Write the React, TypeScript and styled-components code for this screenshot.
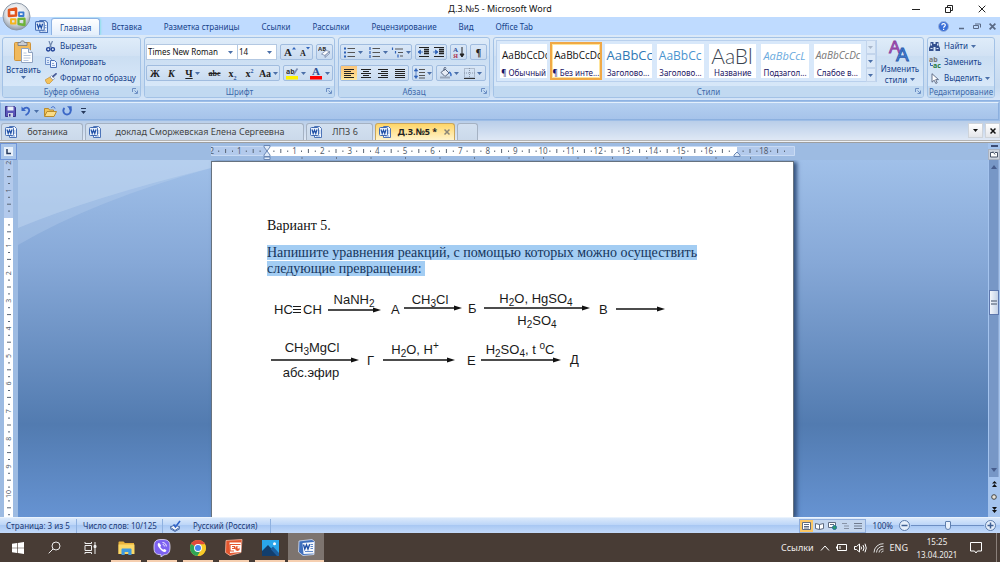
import React from 'react';
import styled, { createGlobalStyle, css } from 'styled-components';

const ui = '"Noto Sans", "Open Sans", sans-serif';
const navy = '#15428b';

const GlobalStyle = createGlobalStyle`
  *, *::before, *::after { box-sizing: border-box; }
  html, body { margin: 0; height: 100%; }
  body { font-family: ${ui}; font-size: 8px; line-height: 12px; color: ${navy}; overflow: hidden; }
  #root { height: 100%; }
  button, select, input { font: inherit; color: inherit; margin: 0; padding: 0; border: 0; background: none; border-radius: 0; }
  a { color: inherit; text-decoration: none; }
  svg { display: block; flex: none; }
  p, h1, h2 { margin: 0; font-weight: 400; font-size: inherit; }
`;

const Window = styled.div`
  display: flex;
  flex-direction: column;
  height: 100vh;
  position: relative;
  background: #9dbde6;
`;

/* ---------- title bar and tab strip ---------- */

const TitleBar = styled.header`
  display: grid;
  grid-template-columns: 1fr auto 1fr;
  align-items: center;
  height: 17px;
  background: #fff;
  color: #111;
  font-size: 9px;
`;
const WindowButtons = styled.div`
  display: flex;
  grid-column: 3;
  justify-content: flex-end;
  padding-right: 2px;
`;
const WindowButton = styled.button`
  width: 33px;
  height: 16px;
  display: flex;
  align-items: center;
  justify-content: center;
`;
const Title = styled.h1`
  grid-column: 2;
`;

const OfficeButton = styled.button`
  position: absolute;
  z-index: 2;
  left: 2px;
  top: 2px;
`;

const TabStrip = styled.nav`
  display: flex;
  align-items: stretch;
  height: 18px;
  padding-left: 35px;
  background: #bfdbff;
`;
const StripIcon = styled.span`
  display: flex;
  align-items: center;
  width: 16px;
`;
const RibbonTab = styled.a<{ $active?: boolean }>`
  display: flex;
  align-items: center;
  padding: 2px 11px 0;
  ${(p) =>
    p.$active &&
    css`
      padding: 1px 8px 0;
      margin-top: 1px;
      background: linear-gradient(#fff, #e3eefb);
      border: 1px solid #8db2e3;
      border-bottom: 0;
      border-radius: 3px 3px 0 0;
      box-shadow: 1px 0 2px #8fe0ea;
    `}
`;
const StripTools = styled.div`
  display: flex;
  align-items: center;
  gap: 8px;
  margin-left: auto;
  padding-right: 4px;
`;

/* ---------- ribbon ---------- */

const Ribbon = styled.section`
  display: flex;
  gap: 3px;
  height: 66px;
  padding: 2px 5px 2px 2px;
  background: linear-gradient(#dbe9f8, #c6daf0 80%, #d5e5f8);
  border-bottom: 1px solid #8db2e3;
`;
const Group = styled.section<{ $w?: number }>`
  display: flex;
  flex-direction: column;
  ${(p) => (p.$w ? `width: ${p.$w}px; flex: none;` : 'flex: 1; min-width: 0;')}
  border: 1px solid #a3c2e6;
  border-radius: 3px;
  background: linear-gradient(#dfecf9, #d2e2f4 30%, #cbdef2 31%, #dcebfb);
  overflow: hidden;
`;
const GroupBody = styled.div`
  display: flex;
  flex: 1;
  min-height: 0;
`;
const GroupTitle = styled.h2`
  display: flex;
  align-items: center;
  justify-content: center;
  height: 11px;
  line-height: 11px;
  background: #c1d9f1;
  color: #3e6aaa;
  position: relative;
  white-space: nowrap;
`;
const Launcher = styled.button`
  position: absolute;
  right: 2px;
  top: 2px;
`;
const BigButton = styled.button<{ $w: number }>`
  display: flex;
  flex-direction: column;
  align-items: center;
  width: ${(p) => p.$w}px;
  flex: none;
  padding-top: 2px;
  line-height: 9px;
  gap: 2px;
`;
const WithCaret = styled.span`
  display: flex;
  align-items: center;
  gap: 3px;
`;
const Stack = styled.div`
  display: flex;
  flex-direction: column;
`;
const SmallButton = styled.button`
  display: flex;
  align-items: center;
  gap: 3px;
  height: 16px;
  white-space: nowrap;
`;
const IconSlot = styled.span`
  display: flex;
  justify-content: center;
  width: 13px;
`;
const Rows = styled.div`
  display: flex;
  flex-direction: column;
  gap: 5px;
  padding: 6px 1px 0;
`;
const Row = styled.div`
  display: flex;
  gap: 3px;
`;
const Cluster = styled.div`
  display: flex;
  height: 16px;
  border: 1px solid #a0bcdf;
  border-radius: 2px;
  background: linear-gradient(#d9e7f7, #c9dbf0);
`;
const Tool = styled.button<{ $w: number; $on?: boolean }>`
  width: ${(p) => p.$w}px;
  height: 14px;
  display: flex;
  align-items: center;
  justify-content: center;
  gap: 2px;
  color: #222;
  background: ${(p) => (p.$on ? 'linear-gradient(#fbc67c, #fdd689 60%, #ffe9a0)' : 'none')};
`;
const ComboRow = styled.div`
  display: flex;
`;
const Combo = styled.span<{ $w: number }>`
  display: flex;
  align-items: center;
  width: ${(p) => p.$w}px;
  height: 16px;
  padding-right: 4px;
  background: #fff;
  border: 1px solid #b3c8e2;
  & + & { border-left: 0; }
`;
const Select = styled.select`
  appearance: none;
  flex: 1;
  min-width: 0;
  height: 14px;
  padding-left: 1px;
  color: #111;
  outline: none;
`;
const Glyph = styled.span<{ $face?: 'italic' | 'under' | 'strike' }>`
  font: bold 10px/13px "Liberation Serif", serif;
  ${(p) => p.$face === 'italic' && 'font-style: italic;'}
  ${(p) => p.$face === 'under' && 'text-decoration: underline;'}
  ${(p) => p.$face === 'strike' && 'text-decoration: line-through; font-size: 8px;'}
  sub, sup { font-size: 6px; line-height: 0; color: #2a55a0; }
`;

const Gallery = styled.div`
  display: flex;
  gap: 5px;
  flex: 1;
  min-width: 0;
  margin: 2px 0 4px 2px;
  padding: 1px 0 1px 3px;
  border: 1px solid #b9d0ed;
  background: #d8e8fa;
`;
const StyleCard = styled.button<{ $on?: boolean }>`
  flex: 1;
  min-width: 0;
  margin: 2px 0;
  overflow: hidden;
  display: flex;
  flex-direction: column;
  background: #fff;
  white-space: nowrap;
  color: #1a1464;
  ${(p) => p.$on && 'outline: 2px solid #f0a846; box-shadow: inset 0 0 0 1px #ffe59a;'}
`;
const Sample = styled.span<{ $size: number; $color: string; $italic?: boolean; $light?: boolean }>`
  display: flex;
  align-items: center;
  width: 100%;
  height: 23px;
  padding-left: 2px;
  overflow: hidden;
  font-family: ${(p) => (p.$light ? 'Lato, sans-serif' : '"Open Sans", sans-serif')};
  font-weight: ${(p) => (p.$light ? 300 : 400)};
  font-size: ${(p) => p.$size}px;
  line-height: 23px;
  color: ${(p) => p.$color};
  font-style: ${(p) => (p.$italic ? 'italic' : 'normal')};
`;
const CardName = styled.span`
  width: 100%;
  text-align: center;
  line-height: 11px;
`;
const GalleryScroll = styled.div`
  display: flex;
  flex-direction: column;
  width: 10px;
  margin: -2px 0;
`;
const ScrollStep = styled.button`
  flex: 1;
  display: flex;
  align-items: center;
  justify-content: center;
  border: 1px solid #c3d5ec;
  background: #dce9f8;
`;

/* ---------- quick access and document tabs ---------- */

const QuickAccess = styled.div`
  display: flex;
  align-items: center;
  gap: 5px;
  height: 18px;
  margin: 1px 1px 1px 0;
  padding-left: 4px;
  background: linear-gradient(#b4cff0, #a6c3ea);
  border: 1px solid #8cb0df;
  border-top-color: #e3effc;
`;
const Customize = styled.button`
  padding-left: 4px;
`;
const DocTabs = styled.nav`
  display: flex;
  align-items: flex-end;
  gap: 2px;
  height: 19px;
  padding-left: 1px;
  background: linear-gradient(#b9cee9, #dfe8f5);
`;
const DocTab = styled.a<{ $w: number; $on?: boolean }>`
  display: flex;
  align-items: center;
  width: ${(p) => p.$w}px;
  height: 17px;
  padding: 0 4px 0 3px;
  font-size: 9px;
  white-space: nowrap;
  color: ${(p) => (p.$on ? '#222' : '#444')};
  font-weight: ${(p) => (p.$on ? 700 : 400)};
  border: 1px solid ${(p) => (p.$on ? '#c9a65c' : '#a5b2c3')};
  border-bottom: 0;
  border-radius: 3px 3px 0 0;
  background: ${(p) => (p.$on ? 'linear-gradient(#ffd667, #fff3cb)' : 'linear-gradient(#d3e0f0, #cbd9ea)')};
`;
const DocName = styled.span`
  flex: 1;
  text-align: center;
`;
const DocTools = styled.div`
  display: flex;
  gap: 2px;
  margin-left: auto;
  padding-bottom: 2px;
`;
const DocTool = styled.button`
  width: 15px;
  height: 15px;
  display: flex;
  align-items: center;
  justify-content: center;
  background: linear-gradient(#fff, #e4e6ea);
  border: 1px solid #cfd4da;
`;
const TabRule = styled.div`
  height: 3px;
  background: #eef1f5;
  border-bottom: 1px solid #9e9e9e;
  border-top: 1px solid #b4b4b4;
`;

/* ---------- editing area ---------- */

const Editor = styled.main`
  flex: 1;
  min-height: 0;
  display: grid;
  grid-template-columns: 18px 1fr 12px;
  grid-template-rows: 17px 1fr;
  overflow: hidden;
`;
const TabSelector = styled.button`
  width: 17px;
  height: 17px;
  display: flex;
  align-items: center;
  justify-content: center;
  border: 1px solid #6f95d8;
  background: #a9c5ea;
`;
const HRuler = styled.div`
  display: flex;
  justify-content: center;
  overflow: hidden;
  background: #9dbbe2;
  padding-right: 1px;
`;
const VRuler = styled.div`
  overflow: hidden;
  padding-left: 4px;
  background: #9dbbe2;
`;
const RightColumn = styled.div`
  grid-column: 3;
  grid-row: 1 / 3;
  display: flex;
  flex-direction: column;
  align-items: center;
  background: #a5c4ee;
`;
const Split = styled.button`
  width: 7px;
  height: 2px;
  margin: 2px 0;
  background: #3c4c74;
`;
const RulerToggle = styled.button`
  width: 12px;
  height: 11px;
  display: flex;
  align-items: center;
  justify-content: center;
  background: #cdd3dd;
  border: 1px solid #aab2c0;
`;
const Track = styled.div`
  flex: 1;
  width: 10px;
  display: flex;
  flex-direction: column;
  align-items: center;
  justify-content: space-between;
  padding: 5px 0;
  background: #7797c6;
  border-right: 1px solid #8fabd4;
`;
const Thumb = styled.div`
  width: 10px;
  height: 25px;
  display: flex;
  flex-direction: column;
  align-items: center;
  justify-content: center;
  gap: 1px;
  background: linear-gradient(90deg, #f3f6fb, #c3d1e6);
  border: 1px solid #5d77ad;
  i { width: 6px; height: 2px; background: #8e99aa; }
`;
const ThumbSlot = styled.div`
  flex: 1;
  display: flex;
  flex-direction: column;
  &::before { content: ""; flex: 121; }
  &::after { content: ""; flex: 153; }
`;
const BrowseButtons = styled.div`
  display: flex;
  flex-direction: column;
  align-items: center;
  gap: 7px;
  padding: 4px 0 4px;
`;
const Workspace = styled.div`
  display: grid;
  grid-template-columns: 1fr;
  min-height: 0;
  overflow: hidden;
  background: linear-gradient(#a0c0e9 0, #86a8d7 29%, #527bb0 74%, #6693d2 100%);
`;
const Sweep = styled.svg`
  grid-area: 1 / 1;
  width: 193px;
  height: 86px;
`;
const Page = styled.article`
  grid-area: 1 / 1;
  justify-self: center;
  width: 100%;
  max-width: 583px;
  margin: 1px 1px 0 0;
  padding: 56px 55px 0;
  background: #fff;
  border: 1px solid #66727f;
  border-bottom: 0;
  box-shadow: 3px 1px 4px #33517e;
  font: 14px/16px "Liberation Serif", serif;
  color: #111;
  position: relative;
`;
const Heading = styled.p`
  margin-bottom: 11px;
`;
const Selected = styled.mark`
  background: #a3cdf3;
  color: #16355c;
`;
const Scheme = styled.svg`
  margin-top: 9px;
  font-family: "Liberation Sans", Arial, sans-serif;
  font-size: 13px;
`;

/* ---------- status bar ---------- */

const StatusBar = styled.footer`
  display: flex;
  align-items: center;
  height: 16px;
  background: linear-gradient(#dbe9fb, #bdd6f8 45%, #a9c8f3 50%, #c3dafa);
  border-top: 1px solid #eaf3fd;
  color: #1c3a76;
`;
const StatusItem = styled.span<{ $w: number }>`
  display: flex;
  align-items: center;
  width: ${(p) => p.$w}px;
  height: 14px;
  padding-left: 6px;
  gap: 11px;
  border-right: 1px solid #8fb1e0;
  white-space: nowrap;
`;
const ViewButtons = styled.div`
  display: flex;
  margin-left: auto;
  border: 1px solid #8faddb;
  background: #c4d6ee;
`;
const ViewButton = styled.button<{ $on?: boolean }>`
  width: 13px;
  height: 12px;
  display: flex;
  align-items: center;
  justify-content: center;
  background: ${(p) => (p.$on ? '#fbc765' : 'none')};
`;
const Zoom = styled.label`
  display: flex;
  align-items: center;
  gap: 5px;
  padding: 0 3px 0 7px;
`;
const ZoomRange = styled.input`
  appearance: none;
  width: 73px;
  height: 10px;
  margin: 0 -5px;
  background: linear-gradient(#6d8fc4, #6d8fc4) center / 100% 1px no-repeat;
  &::-webkit-slider-thumb {
    appearance: none;
    width: 6px;
    height: 9px;
    background: #e8f0fb;
    border: 1px solid #5f7fae;
    border-radius: 1px 1px 3px 3px;
  }
`;

/* ---------- taskbar ---------- */

const Taskbar = styled.nav`
  display: flex;
  height: 29px;
  background: #483c35;
  color: #f2efed;
  font-size: 9px;
`;
const TaskButton = styled.button<{ $open?: boolean; $active?: boolean }>`
  width: 36px;
  height: 29px;
  display: flex;
  align-items: center;
  justify-content: center;
  background: ${(p) => (p.$active ? '#7d746f' : 'none')};
  ${(p) =>
    p.$open &&
    `background-image: linear-gradient(#f6cfb0, #f6cfb0);
     background-size: ${p.$active ? '36px' : '30px'} 2px;
     background-position: center bottom;
     background-repeat: no-repeat;`}
`;
const Tray = styled.div`
  display: flex;
  align-items: center;
  gap: 6px;
  margin-left: auto;
  padding-right: 3px;
`;
const Clock = styled.time`
  width: 46px;
  text-align: center;
  font-size: 8px;
  line-height: 13px;
`;
const Notice = styled.button`
  padding: 0 14px 0 4px;
  border-right: 1px solid #8a807a;
  height: 29px;
`;

/* ---------- icons ---------- */

const Caret = ({ c = '#4b6fa8' }: { c?: string }) => (
  <svg width="5" height="3" viewBox="0 0 5 3"><path d="M0 0h5L2.500 3z" fill={c} /></svg>
);
const BarCaret = () => (
  <svg width="5" height="6" viewBox="0 0 5 6"><path d="M0 0h5v1H0zM0 3h5L2.500 6z" fill="#26395c" /></svg>
);
const LaunchIcon = () => (
  <svg width="6" height="6" viewBox="0 0 6 6" fill="none" stroke="#6c8fc4">
    <path d="M.5 4V.5H4M2.500 2.500 5 5M5.500 2.500v3h-3" />
  </svg>
);
const WordDocIcon = ({ s = 12 }: { s?: number }) => (
  <svg width={s} height={s} viewBox="0 0 12 12">
    <path d="M4.500.5h5l2 2v9h-7z" fill="#f4f8fe" stroke="#4d74b8" />
    <path d="M9 5h1.500M9 7h1.500M6 10h4" stroke="#7fa0d6" />
    <rect x=".5" y="1.500" width="8" height="8" rx="1" fill="#e9f1fc" stroke="#3f69b2" />
    <path d="M2 3.500 3.200 7.500 4.500 4.200 5.800 7.500 7 3.500" fill="none" stroke="#1f4fa6" strokeWidth="1.200" />
  </svg>
);
const OfficeLogo = () => (
  <svg width="29" height="29" viewBox="0 0 29 29">
    <defs>
      <radialGradient id="orb" cx=".5" cy=".35" r=".65">
        <stop offset="0" stopColor="#fff" /><stop offset=".6" stopColor="#dfe3e8" /><stop offset="1" stopColor="#8f9aa8" />
      </radialGradient>
    </defs>
    <circle cx="14.500" cy="14.500" r="13.500" fill="url(#orb)" stroke="#8d99a8" />
    <g fill="none" strokeLinejoin="round">
      <path d="M7 8l7-1.500v7l-7 .5z" stroke="#e2551d" strokeWidth="2.600" />
      <path d="M17 10.300h4.500v3.700H17z" stroke="#3a7ad0" strokeWidth="1.800" />
      <path d="M9 17.300h4.500v4.200H9z" stroke="#f4b51e" strokeWidth="2" />
      <path d="M16.500 17l6-.3v6.300l-6-1z" stroke="#6eb43a" strokeWidth="2.300" />
    </g>
  </svg>
);
const PasteIcon = () => (
  <svg width="20" height="23" viewBox="0 0 20 23">
    <rect x=".5" y="2.500" width="16" height="18" rx="1" fill="#f0b95c" stroke="#cf9338" />
    <path d="M4 2.500h2.500C6.500.3 10.500.3 10.500 2.500H13v3H4z" fill="#c8ccd4" stroke="#6f7683" strokeWidth=".8" />
    <path d="M7.500 8.500h7l4 4v10h-11z" fill="#fff" stroke="#8fa2c0" />
    <path d="M14.500 8.500v4h4" fill="#dfe9f7" stroke="#8fa2c0" />
    <path d="M9.500 13h3M9.500 15.500h7M9.500 18h7M9.500 20.500h5" stroke="#b9c8df" />
  </svg>
);
const CutIcon = () => (
  <svg width="11" height="11" viewBox="0 0 11 11" fill="none">
    <path d="M4 0 6.300 6.500M7.500 0 4.700 6.500" stroke="#7088ad" strokeWidth="1.200" />
    <circle cx="3.300" cy="8.300" r="1.700" stroke="#23459a" strokeWidth="1.400" />
    <circle cx="7.800" cy="8.300" r="1.700" stroke="#23459a" strokeWidth="1.400" />
  </svg>
);
const CopyIcon = () => (
  <svg width="12" height="11" viewBox="0 0 12 11">
    <path d="M.5.5h4l2 2v5h-6z" fill="#dce9fb" stroke="#6f8fc8" />
    <path d="M5.500 3.500h4l2 2v5h-6z" fill="#eef5ff" stroke="#4b71b8" />
    <path d="M7 6.500h2M7 8.500h3M2 3.500h2M2 5.500h2" stroke="#6f8fc8" strokeWidth=".8" />
  </svg>
);
const BrushIcon = () => (
  <svg width="12" height="11" viewBox="0 0 12 11">
    <path d="M0 7 5 4l3 3-4 4-2-.5z" fill="#f4c25a" stroke="#c4923a" strokeWidth=".7" />
    <path d="M5 4 6.500 2.500l3.200 3L8 7z" fill="#f3f5f9" stroke="#8492ab" strokeWidth=".7" />
    <path d="M8 3.500 11 .8" stroke="#4a5e9a" strokeWidth="1.800" strokeLinecap="round" />
  </svg>
);
const GrowIcon = ({ shrink }: { shrink?: boolean }) => (
  <svg width="13" height="12" viewBox="0 0 13 12">
    <text x={shrink ? 2 : 1} y="10" fontFamily="Liberation Serif, serif" fontSize={shrink ? 8 : 11} fontWeight="700" fill="#222">A</text>
    <path d={shrink ? 'M8 1h4l-2 2.500z' : 'M9 3.500h4L11 1z'} fill="#2f62b8" />
  </svg>
);
const EraserIcon = () => (
  <svg width="13" height="12" viewBox="0 0 13 12">
    <text x="0" y="5" fontFamily="Open Sans, sans-serif" fontSize="6" fontWeight="700" fill="#333">AB</text>
    <path d="M3.500 8 8 4.500l3.500 1-4.500 4z" fill="#fff" stroke="#7788aa" strokeWidth=".8" />
    <path d="M7 9.500v2l4.500-4v-2z" fill="#cdd8ea" stroke="#7788aa" strokeWidth=".8" />
  </svg>
);
const HighlightIcon = () => (
  <svg width="13" height="13" viewBox="0 0 13 13">
    <rect y="9" width="12" height="3.500" fill="#fff200" />
    <text x="0" y="7" fontFamily="Open Sans, sans-serif" fontSize="7" fontWeight="700" fill="#333">ab</text>
    <path d="M7.500 7.500 11.500 1.500" stroke="#7a8db3" strokeWidth="1.600" />
  </svg>
);
const FontColorIcon = () => (
  <svg width="13" height="13" viewBox="0 0 13 13">
    <rect y="9" width="12" height="3.500" fill="#ff0000" />
    <text x="2" y="8" fontFamily="Liberation Serif, serif" fontSize="11" fontWeight="700" fill="#2c4f93">A</text>
  </svg>
);
const ListIcon = ({ kind }: { kind: 'dot' | 'num' | 'multi' }) => (
  <svg width="13" height="11" viewBox="0 0 13 11">
    {kind === 'multi' ? (
      <><path d="M4 2h8M7 5.500h5M9 9h3" stroke="#555" /><path d="M1.500.5v2.500M4.500 4v2.500M7 7.500v3" stroke="#2f62b8" strokeWidth="1.200" /></>
    ) : (
      <>
        <path d="M4.500 1.500H12M4.500 5.500H12M4.500 9.500H12" stroke="#555" />
        {kind === 'dot'
          ? <path d="M1 .5h2v2H1zM1 4.500h2v2H1zM1 8.500h2v2H1z" fill="#2f62b8" />
          : <path d="M2 0v3M2 4v3M2 8v3" stroke="#2f62b8" strokeWidth="1.200" />}
      </>
    )}
  </svg>
);
const IndentIcon = ({ flip }: { flip?: boolean }) => (
  <svg width="12" height="10" viewBox="0 0 12 10">
    <path d="M1 .5h10M1 9.500h10" stroke="#222" />
    <path d="M6 2.500h5M6 4.500h5M6 6.500h5" stroke="#222" strokeWidth="1.400" />
    <path d={flip ? 'M0 5h3M2.500 3 5 5 2.500 7z' : 'M2 5h3M2.500 3 0 5l2.500 2z'} fill="#2f62b8" stroke="#2f62b8" strokeWidth=".8" />
  </svg>
);
const SortIcon = () => (
  <svg width="12" height="13" viewBox="0 0 12 13">
    <text x="0" y="6" fontFamily="Liberation Serif, serif" fontSize="7" fontWeight="700" fill="#2f4f9a">А</text>
    <text x="0" y="12" fontFamily="Liberation Serif, serif" fontSize="7" fontWeight="700" fill="#b13a55">Я</text>
    <path d="M9 1v9M7 8 9 11l2-3z" stroke="#222" fill="#222" />
  </svg>
);
const AlignIcon = ({ kind }: { kind: 'left' | 'center' | 'right' | 'both' }) => {
  const d = {
    left: 'M1 .5h10M1 2.500h7M1 4.500h10M1 6.500h7M1 8.500h10',
    center: 'M1 .5h10M3 2.500h6M1 4.500h10M3 6.500h6M1 8.500h10',
    right: 'M1 .5h10M4 2.500h7M1 4.500h10M4 6.500h7M1 8.500h10',
    both: 'M1 .5h10M1 2.500h10M1 4.500h10M1 6.500h10M1 8.500h10',
  }[kind];
  return <svg width="12" height="9" viewBox="0 0 12 9"><path d={d} stroke="#222" strokeWidth="1.200" /></svg>;
};
const SpacingIcon = () => (
  <svg width="11" height="11" viewBox="0 0 11 11">
    <path d="M5 1.500h6M5 4.500h6M5 7.500h6M5 10h6" stroke="#555" />
    <path d="M2 2v7M.3 3 2 .5 3.700 3zM.3 8 2 10.500 3.700 8z" stroke="#2f62b8" fill="#2f62b8" strokeWidth=".7" />
  </svg>
);
const BucketIcon = () => (
  <svg width="13" height="12" viewBox="0 0 13 12">
    <path d="M2 5.500 6 2l4 4-4 3.500z" fill="#e7edf6" stroke="#56657f" />
    <path d="M5 4V1.500c0-1.500 2-1.500 2 0" fill="none" stroke="#56657f" />
    <path d="M10 5c2 1 2.500 3 1.500 4" stroke="#3b6fc4" strokeWidth="1.500" fill="none" />
    <path d="M1 10.500h10" stroke="#9aa7ba" strokeWidth="2" />
  </svg>
);
const BordersIcon = () => (
  <svg width="11" height="11" viewBox="0 0 11 11">
    <path d="M.5.5h10v9H.5zM5.500 0v10M0 5h11" fill="none" stroke="#8995a8" strokeDasharray="1 1" />
    <path d="M0 10.500h11" stroke="#333" />
  </svg>
);
const ChangeStylesIcon = () => (
  <svg width="24" height="22" viewBox="0 0 24 22" fontFamily="Liberation Sans, sans-serif">
    <text x="1" y="13" fontSize="17" fill="#b65cc4" stroke="#8a3f9e" strokeWidth=".8">A</text>
    <text x="8" y="21" fontSize="19" fill="#4f8de0" stroke="#2b5cae" strokeWidth=".9">A</text>
  </svg>
);
const FindIcon = () => (
  <svg width="11" height="10" viewBox="0 0 11 10" fill="#35518f">
    <path d="M1.500 1h3v2h2V1h3v3l1.500 3v3H6.500V6h-2v4H0V7l1.500-3z" />
    <path d="M1.500 7.500h2M7.500 7.500h2M2.500 2.500v2M8.500 2.500v2" stroke="#dbe7f8" />
  </svg>
);
const ReplaceIcon = () => (
  <svg width="12" height="12" viewBox="0 0 12 12" fontFamily="Open Sans, sans-serif" fontWeight="700" fontSize="7">
    <text x="0" y="5.500" fill="#777">ab</text><text x="4" y="11.500" fill="#217a3a">ac</text>
    <path d="M1.500 7v2.500H4" fill="none" stroke="#2f62b8" />
  </svg>
);
const SelectIcon = () => (
  <svg width="10" height="11" viewBox="0 0 10 11">
    <path d="M2 .7v8.500l2.200-2 1.600 3.300 1.400-.7-1.500-3.200h2.800z" fill="#fff" stroke="#55637e" strokeWidth=".9" />
  </svg>
);
const SaveIcon = () => (
  <svg width="11" height="11" viewBox="0 0 11 11">
    <path d="M.5.5h9l1 1v9H.5z" fill="#5a55b8" stroke="#38348c" />
    <path d="M2.500.5h6v4h-6z" fill="#e9f0fb" /><path d="M3 7h5v4H3z" fill="#ccd5e6" /><path d="M4 8h1.500v2.500H4z" fill="#38348c" />
  </svg>
);
const UndoIcon = () => (
  <svg width="10" height="10" viewBox="0 0 10 10">
    <path d="M.5.5v4.500H5z" fill="#3b67c6" /><path d="M2 3.500C5 0 9 2 8 5.500 7.500 7.500 6 8.500 4.500 9.200" fill="none" stroke="#3b67c6" strokeWidth="1.800" />
  </svg>
);
const RedoIcon = () => (
  <svg width="10" height="10" viewBox="0 0 10 10">
    <path d="M2.500 2A3.700 3.700 0 1 0 7.500 2" fill="none" stroke="#3b67c6" strokeWidth="1.900" /><path d="M5 .3h4.700V5z" fill="#3b67c6" />
  </svg>
);
const OpenIcon = () => (
  <svg width="13" height="11" viewBox="0 0 13 11">
    <path d="M.5 10V2.500h4l1 1.500h4v1.500" fill="#f2c459" stroke="#b98b2e" /><path d="M.5 10.500 3 5.500h9.500l-2.500 5z" fill="#fbdc86" stroke="#b98b2e" />
    <path d="M7 2c1.500-2 3.500-1.500 4 .5" fill="none" stroke="#3b67c6" />
  </svg>
);
const HelpIcon = () => (
  <svg width="11" height="11" viewBox="0 0 11 11">
    <circle cx="5.500" cy="5.500" r="5" fill="#3a6fd8" stroke="#9ab2dd" />
    <path d="M3.800 4.300c0-2.300 3.500-2.300 3.500-.2 0 1.400-1.700 1.300-1.700 2.700M5.600 7.800v1.100" stroke="#fff" strokeWidth="1.200" fill="none" />
  </svg>
);
const CrossIcon = ({ s = 8, c = '#222', w = 1 }: { s?: number; c?: string; w?: number }) => (
  <svg width={s} height={s} viewBox="0 0 8 8"><path d="M.7.7l6.600 6.600M7.300.7.7 7.300" stroke={c} strokeWidth={w} /></svg>
);
const MinIcon = ({ c = '#222' }: { c?: string }) => (
  <svg width="8" height="8" viewBox="0 0 8 8"><path d="M0 4.500h8" stroke={c} /></svg>
);
const RestoreIcon = ({ c = '#222' }: { c?: string }) => (
  <svg width="8" height="8" viewBox="0 0 8 8" fill="none" stroke={c}><path d="M.5 2.500h5v5h-5zM2.500 2V.5h5v5H6" /></svg>
);
const DocMinIcon = () => (
  <svg width="8" height="8" viewBox="0 0 8 8"><path d="M2 6.500h5" stroke="#5a6a86" strokeWidth="1.500" /></svg>
);
const DocRestoreIcon = () => (
  <svg width="8" height="8" viewBox="0 0 8 8" fill="none" stroke="#5a6a86"><path d="M.5 3.500h5v3h-5zM2 2h5.500v3.500" /></svg>
);
const ProofIcon = () => (
  <svg width="13" height="12" viewBox="0 0 13 12">
    <path d="M1 7 6 5l5 2-5 3.500z" fill="#f4f7fc" stroke="#4c6da8" /><path d="M1 8.500l5 3 5-3" fill="none" stroke="#4c6da8" />
    <path d="M4.500 4.500 6.500 7 11 1" fill="none" stroke="#2f62c8" strokeWidth="1.600" />
  </svg>
);
const ViewIcon = ({ kind }: { kind: 'print' | 'read' | 'web' | 'outline' | 'draft' }) => (
  <svg width="9" height="8" viewBox="0 0 9 8" fill="none" stroke="#5f6b80">
    {kind === 'print' && <path d="M.5.5h8v7h-8zM2 2.500h5M2 4.500h5M2 6h5" fill="#fff" />}
    {kind === 'read' && <path d="M.5 1.500l4 1 4-1v5l-4 1-4-1zM4.500 2.500v5" fill="#fff" />}
    {kind === 'web' && <><path d="M.5.5h7v5h-7zM2 2.500h4" fill="#fff" /><circle cx="6.500" cy="5.500" r="2" fill="#2f9a6a" stroke="#23709a" /></>}
    {kind === 'outline' && <path d="M1 1.500h5M3 4h5M3 6.500h5" stroke="#8793a6" />}
    {kind === 'draft' && <path d="M0 1.500h8M0 4h8M0 6.500h8" stroke="#6f7a8d" />}
  </svg>
);
const ZoomSign = ({ plus }: { plus?: boolean }) => (
  <svg width="13" height="13" viewBox="0 0 13 13">
    <circle cx="6.500" cy="6.500" r="5" fill="#e6effb" stroke="#5c7cab" />
    <path d={plus ? 'M3.500 6.500h6M6.500 3.500v6' : 'M3.500 6.500h6'} stroke="#3f5f92" strokeWidth="1.500" />
  </svg>
);

/* taskbar drawings */
const StartIcon = () => (
  <svg width="12" height="12" viewBox="0 0 13 13" fill="#fff"><path d="M0 1.900 5.500 1.100v5H0zM6.200 1 13 0v6.100H6.200zM0 6.800h5.500v5L0 11zM6.200 6.800H13V13l-6.800-1z" /></svg>
);
const SearchIcon = () => (
  <svg width="13" height="13" viewBox="0 0 13 13" fill="none" stroke="#eee"><circle cx="8" cy="5" r="4" /><path d="M5 8 .7 12.300" /></svg>
);
const TaskViewIcon = () => (
  <svg width="13" height="12" viewBox="0 0 13 12" fill="none" stroke="#eee">
    <path d="M1 3.500h6.500v5H1zM1 0v1.500h6.500V0M1 12v-1.500h6.500V12M11 0v12" /><path d="M10 3.500h2v2h-2z" fill="#eee" />
  </svg>
);
const ExplorerIcon = () => (
  <svg width="17" height="14" viewBox="0 0 17 14">
    <path d="M.5 1.500c0-.8.5-1 1-1h4l1.500 1.500h9v11H.5z" fill="#e9b33c" /><path d="M.5 3.500h16v9.500H.5z" fill="#fbd968" />
    <path d="M3.500 14V8.500c0-.6.4-1 1-1h8c.6 0 1 .4 1 1V14h-3.200v-3H6.700v3z" fill="#3f9ae0" />
  </svg>
);
const ViberIcon = () => (
  <svg width="18" height="18" viewBox="0 0 18 18">
    <path d="M9 .5c6 0 8 1.500 8 7.500s-2 7.500-6 7.800L8 18v-2.300C2.500 15.500 1 14 1 8S3 .5 9 .5z" fill="#7d62f0" stroke="#e9e4fd" strokeWidth=".8" />
    <path d="M5.500 4c-1.500 1-.8 3 1 5.300s4 4 5.500 3.700c1.500-.6 1.700-1.700.8-2.300-1.500-1-1.800-.8-2.500 0-1-.3-2.500-1.800-3-3 .8-.7 1-1 .3-2C7 4.800 6.300 3.500 5.500 4z" fill="#fff" />
    <path d="M9.500 3.500c2.500.2 3.800 1.700 3.800 4M9.700 5.500c1.200.1 1.700.8 1.700 1.900" fill="none" stroke="#fff" strokeWidth=".9" />
  </svg>
);
const ChromeIcon = () => (
  <svg width="16" height="16" viewBox="0 0 16 16">
    <circle cx="8" cy="8" r="8" fill="#f7c928" />
    <path d="M8 8 1.070 4A8 8 0 0 1 14.930 4z" fill="#e04a3a" />
    <path d="M1.070 4A8 8 0 0 0 7.500 16L11.200 9.800 8 8z" fill="#2fa556" />
    <path d="M8 4.300h6.930A8 8 0 0 1 7.500 16l3.700-6z" fill="#f7c928" />
    <circle cx="8" cy="8" r="3.900" fill="#fff" /><circle cx="8" cy="8" r="3" fill="#4584ee" />
  </svg>
);
const PowerPointIcon = () => (
  <svg width="18" height="17" viewBox="0 0 18 17">
    <path d="M1 1.500 17 .5l-1 13-11 3-4.500-3z" fill="#e4572e" stroke="#f7b9a3" strokeWidth=".8" />
    <path d="M4.500 3.500h11.500v9.500L5 14z" fill="#fff" />
    <path d="M5 5.500h10.500M5 5.500v6.500h4" fill="none" stroke="#e4572e" strokeWidth="1.200" />
    <path d="M7 7.500h2.500v2H7" fill="none" stroke="#e4572e" strokeWidth="1.200" />
    <circle cx="12.500" cy="9.500" r="2.400" fill="#e4572e" /><path d="M12.500 9.500V7.300h2.200v2.200z" fill="#fff" />
  </svg>
);
const PhotosIcon = () => (
  <svg width="17" height="16" viewBox="0 0 17 16">
    <path d="M0 0h17v16H0z" fill="#2aa6ea" /><path d="M0 11 6 5l10 11H0z" fill="#123e6d" /><path d="M8.500 9 11 6.500 17 13v3h-2z" fill="#1c5f9f" />
    <circle cx="12.500" cy="3.800" r="1.500" fill="#fff" />
  </svg>
);
const WordIcon = () => (
  <svg width="17" height="17" viewBox="0 0 17 17">
    <path d="M1 2 14 .5l2.500 2-.5 13-11 1L.5 13z" fill="#3f6fbd" stroke="#d5e0f2" strokeWidth=".8" />
    <path d="M4.500 4 16 3v11.500L5.500 15z" fill="#f5f8fd" />
    <path d="M12.500 5.500H15M12.500 7.500H15M12.500 9.500H15M7 12.500h8" stroke="#5f88c9" />
    <path d="M5.500 5.500 6.800 10 8.500 6l1.500 4 1.700-4.700" fill="none" stroke="#1f4fa6" strokeWidth="1.400" />
  </svg>
);

/* ---------- rulers ---------- */

const STEP = 27.6;
const HorizontalRuler = () => {
  const marks: React.ReactNode[] = [];
  for (let q = -8; q <= 75; q++) {
    if (q === 0 || q === 68) continue;
    const x = 56 + (q * STEP) / 4;
    const n = Math.abs(q / 4);
    if (q % 4 === 0) marks.push(<text key={q} x={x} y="11" textAnchor="middle">{n}</text>);
    else if (q % 2 === 0) marks.push(<path key={q} d={`M${x} 6v4`} stroke="#5b6675" />);
    else marks.push(<path key={q} d={`M${x} 7.500v1.500`} stroke="#5b6675" />);
  }
  return (
    <svg width="584" height="17" viewBox="0 0 584 17" fontFamily="Noto Sans, sans-serif" fontSize="8" fill="#555e6c">
      <path d="M.5 3.500h583v9H.5z" fill="#b3caec" stroke="#c9dbf4" />
      <path d="M56 4h470v9H56z" fill="#fff" />
      {marks}
      {Array.from({ length: 14 }, (_, i) => <path key={`t${i}`} d={`M${91 + i * 34.500} 14v2`} stroke="#6c7a90" />)}
      <path d="M53 2.500h6v1.500L56 8l-3-4zM53 13.500V12l3-4 3 4v1.500zM53 14h6v2.500h-6z" fill="#dfeaf8" stroke="#6a87b5" />
      <path d="M523 13.500V12l3-3 3 3v1.500z" fill="#dfeaf8" stroke="#6a87b5" />
    </svg>
  );
};
const VerticalRuler = () => {
  const marks: React.ReactNode[] = [];
  for (let q = -8; q <= 80; q++) {
    if (q === 0) continue;
    const y = 58 + (q * STEP) / 4;
    if (q % 4 === 0)
      marks.push(<text key={q} x="0" y="0" textAnchor="middle" transform={`translate(7 ${y}) rotate(-90)`}>{Math.abs(q / 4)}</text>);
    else if (q % 2 === 0) marks.push(<path key={q} d={`M3 ${y}h4`} stroke="#5b6675" />);
    else marks.push(<path key={q} d={`M4 ${y}h2`} stroke="#5b6675" />);
  }
  return (
    <svg width="10" height="620" viewBox="0 0 10 620" fontFamily="Noto Sans, sans-serif" fontSize="7" fill="#555e6c">
      <path d="M0 0h9v620H0z" fill="#fff" />
      <path d="M0 0h9v58H0z" fill="#b3caec" />
      {marks}
    </svg>
  );
};

/* ---------- reaction scheme ---------- */

type ArrowProps = { x1: number; x2: number; y: number };
const Arrow = ({ x1, x2, y }: ArrowProps) => (
  <g>
    <path d={`M${x1} ${y}H${x2 - 4}`} stroke="#111" strokeWidth="1.300" />
    <path d={`M${x2} ${y}l-8-2.500v5z`} fill="#111" />
  </g>
);
const Formula = ({ x, y, parts }: { x: number; y: number; parts: string[] }) => (
  <text x={x} y={y} textAnchor="middle">
    {parts.map((p, i) => {
      const down = p[0] === '_';
      const up = p[0] === '^';
      const prev = i > 0 ? parts[i - 1][0] : '';
      const back = prev === '_' ? -3 : prev === '^' ? 5 : 0;
      return (
        <tspan key={i} dy={down ? 3 : up ? -5 : back} fontSize={down || up ? 10 : undefined}>
          {down || up ? p.slice(1) : p}
        </tspan>
      );
    })}
  </text>
);
const ReactionScheme = () => (
  <Scheme width="410" height="106" viewBox="0 0 410 106" role="img" aria-label="Схема превращений" fill="#1a1a1a">
    <text x="7" y="28">НС</text>
    <path d="M26 20.500h8M26 23.500h8M26 26.500h8" stroke="#1a1a1a" />
    <text x="36" y="28">СН</text>
    <Arrow x1={61} x2={114} y={24} />
    <Formula x={87} y={18} parts={['NaNH', '_2']} />
    <text x="124" y="28">А</text>
    <Arrow x1={137} x2={195} y={22} />
    <Formula x={163} y={18} parts={['CH', '_3', 'Cl']} />
    <text x="201" y="27">Б</text>
    <Arrow x1={217} x2={323} y={22} />
    <Formula x={269} y={17} parts={['H', '_2', 'O, HgSO', '_4']} />
    <Formula x={270} y={39} parts={['H', '_2', 'SO', '_4']} />
    <text x="332" y="28">В</text>
    <Arrow x1={349} x2={398} y={23} />
    <Arrow x1={4} x2={92} y={74} />
    <Formula x={45} y={66} parts={['CH', '_3', 'MgCl']} />
    <text x="44" y="91" textAnchor="middle">абс.эфир</text>
    <text x="100" y="79">Г</text>
    <Arrow x1={116} x2={188} y={74} />
    <Formula x={148} y={68} parts={['H', '_2', 'O, H', '^+']} />
    <text x="200" y="79">Е</text>
    <Arrow x1={214} x2={294} y={74} />
    <Formula x={253} y={68} parts={['H', '_2', 'SO', '_4', ', t ', '^o', 'C']} />
    <text x="303" y="78">Д</text>
  </Scheme>
);

/* ---------- data ---------- */

const ribbonTabs = ['Главная', 'Вставка', 'Разметка страницы', 'Ссылки', 'Рассылки', 'Рецензирование', 'Вид', 'Office Tab'];
const styleCards = [
  { name: '¶ Обычный', sample: 'AaBbCcDc', size: 10, color: '#111' },
  { name: '¶ Без инте...', sample: 'AaBbCcDc', size: 10, color: '#111', on: true },
  { name: 'Заголово...', sample: 'AaBbCc', size: 13, color: '#2f78b5' },
  { name: 'Заголово...', sample: 'AaBbCc', size: 12, color: '#4a94cf' },
  { name: 'Название', sample: 'AaBl', size: 21, color: '#39434f', light: true },
  { name: 'Подзагол...', sample: 'AaBbCcL', size: 11, color: '#6aaade', italic: true },
  { name: 'Слабое в...', sample: 'AaBbCcDc', size: 10, color: '#777', italic: true },
];

export default function App() {
  return (
    <>
      <GlobalStyle />
      <Window>
        <OfficeButton aria-label="Office"><OfficeLogo /></OfficeButton>
        <TitleBar>
          <Title>Д.З.№5 - Microsoft Word</Title>
          <WindowButtons>
            <WindowButton aria-label="Свернуть"><MinIcon /></WindowButton>
            <WindowButton aria-label="Восстановить"><RestoreIcon /></WindowButton>
            <WindowButton aria-label="Закрыть"><CrossIcon /></WindowButton>
          </WindowButtons>
        </TitleBar>

        <TabStrip>
          <StripIcon><WordDocIcon s={13} /></StripIcon>
          {ribbonTabs.map((t, i) => <RibbonTab key={t} href="#" $active={i === 0}>{t}</RibbonTab>)}
          <StripTools>
            <button aria-label="Справка"><HelpIcon /></button>
            <button aria-label="Свернуть документ"><DocMinIcon /></button>
            <button aria-label="Восстановить документ"><DocRestoreIcon /></button>
            <button aria-label="Закрыть документ"><CrossIcon s={7} c="#5a6a86" w={2} /></button>
          </StripTools>
        </TabStrip>

        <Ribbon>
          <Group $w={139}>
            <GroupBody>
              <BigButton $w={41}><PasteIcon />Вставить<Caret /></BigButton>
              <Stack>
                <SmallButton><IconSlot><CutIcon /></IconSlot>Вырезать</SmallButton>
                <SmallButton><IconSlot><CopyIcon /></IconSlot>Копировать</SmallButton>
                <SmallButton><IconSlot><BrushIcon /></IconSlot>Формат по образцу</SmallButton>
              </Stack>
            </GroupBody>
            <GroupTitle>Буфер обмена<Launcher aria-label="Буфер обмена: параметры"><LaunchIcon /></Launcher></GroupTitle>
          </Group>

          <Group $w={191}>
            <GroupBody>
              <Rows>
                <Row>
                  <ComboRow>
                    <Combo $w={92}>
                      <Select aria-label="Шрифт" defaultValue="Times New Roman"><option>Times New Roman</option></Select><Caret />
                    </Combo>
                    <Combo $w={39}>
                      <Select aria-label="Размер шрифта" defaultValue="14"><option>14</option></Select><Caret />
                    </Combo>
                  </ComboRow>
                  <Cluster>
                    <Tool $w={16} aria-label="Увеличить шрифт"><GrowIcon /></Tool>
                    <Tool $w={15} aria-label="Уменьшить шрифт"><GrowIcon shrink /></Tool>
                  </Cluster>
                  <Cluster><Tool $w={15} aria-label="Очистить формат"><EraserIcon /></Tool></Cluster>
                </Row>
                <Row>
                  <Cluster>
                    <Tool $w={16} aria-label="Полужирный"><Glyph>Ж</Glyph></Tool>
                    <Tool $w={17} aria-label="Курсив"><Glyph $face="italic">К</Glyph></Tool>
                    <Tool $w={25} aria-label="Подчёркнутый"><Glyph $face="under">Ч</Glyph><Caret /></Tool>
                    <Tool $w={19} aria-label="Зачёркнутый"><Glyph $face="strike">abc</Glyph></Tool>
                    <Tool $w={17} aria-label="Подстрочный"><Glyph>x<sub>2</sub></Glyph></Tool>
                    <Tool $w={17} aria-label="Надстрочный"><Glyph>x<sup>2</sup></Glyph></Tool>
                    <Tool $w={21} aria-label="Регистр"><Glyph>Aa</Glyph><Caret /></Tool>
                  </Cluster>
                  <Cluster>
                    <Tool $w={24} aria-label="Выделение цветом"><HighlightIcon /><Caret /></Tool>
                    <Tool $w={24} aria-label="Цвет текста"><FontColorIcon /><Caret /></Tool>
                  </Cluster>
                </Row>
              </Rows>
            </GroupBody>
            <GroupTitle>Шрифт<Launcher aria-label="Шрифт: параметры"><LaunchIcon /></Launcher></GroupTitle>
          </Group>

          <Group $w={152}>
            <GroupBody>
              <Rows>
                <Row>
                  <Cluster>
                    <Tool $w={24} aria-label="Маркеры"><ListIcon kind="dot" /><Caret /></Tool>
                    <Tool $w={25} aria-label="Нумерация"><ListIcon kind="num" /><Caret /></Tool>
                    <Tool $w={21} aria-label="Многоуровневый список"><ListIcon kind="multi" /><Caret /></Tool>
                  </Cluster>
                  <Cluster>
                    <Tool $w={15} aria-label="Уменьшить отступ"><IndentIcon /></Tool>
                    <Tool $w={15} aria-label="Увеличить отступ"><IndentIcon flip /></Tool>
                  </Cluster>
                  <Cluster><Tool $w={15} aria-label="Сортировка"><SortIcon /></Tool></Cluster>
                  <Cluster><Tool $w={15} aria-label="Знаки"><Glyph>¶</Glyph></Tool></Cluster>
                </Row>
                <Row>
                  <Cluster>
                    <Tool $w={16} $on aria-label="По левому краю"><AlignIcon kind="left" /></Tool>
                    <Tool $w={17} aria-label="По центру"><AlignIcon kind="center" /></Tool>
                    <Tool $w={17} aria-label="По правому краю"><AlignIcon kind="right" /></Tool>
                    <Tool $w={17} aria-label="По ширине"><AlignIcon kind="both" /></Tool>
                  </Cluster>
                  <Cluster><Tool $w={19} aria-label="Интервал"><SpacingIcon /><Caret /></Tool></Cluster>
                  <Cluster>
                    <Tool $w={24} aria-label="Заливка"><BucketIcon /><Caret /></Tool>
                    <Tool $w={24} aria-label="Границы"><BordersIcon /><Caret /></Tool>
                  </Cluster>
                </Row>
              </Rows>
            </GroupBody>
            <GroupTitle>Абзац<Launcher aria-label="Абзац: параметры"><LaunchIcon /></Launcher></GroupTitle>
          </Group>

          <Group>
            <GroupBody>
              <Gallery>
                {styleCards.map((s) => (
                  <StyleCard key={s.name + s.size} $on={s.on}>
                    <Sample $size={s.size} $color={s.color} $italic={s.italic} $light={s.light}>{s.sample}</Sample>
                    <CardName>{s.name}</CardName>
                  </StyleCard>
                ))}
                <GalleryScroll>
                  <ScrollStep aria-label="Вверх"><Caret c="#a9b7cb" /></ScrollStep>
                  <ScrollStep aria-label="Вниз"><Caret /></ScrollStep>
                  <ScrollStep aria-label="Ещё"><Caret /></ScrollStep>
                </GalleryScroll>
              </Gallery>
              <BigButton $w={46}><ChangeStylesIcon />Изменить<WithCaret>стили <Caret /></WithCaret></BigButton>
            </GroupBody>
            <GroupTitle>Стили<Launcher aria-label="Стили: параметры"><LaunchIcon /></Launcher></GroupTitle>
          </Group>

          <Group $w={68}>
            <GroupBody>
              <Stack>
                <SmallButton><IconSlot><FindIcon /></IconSlot>Найти <Caret /></SmallButton>
                <SmallButton><IconSlot><ReplaceIcon /></IconSlot>Заменить</SmallButton>
                <SmallButton><IconSlot><SelectIcon /></IconSlot>Выделить <Caret /></SmallButton>
              </Stack>
            </GroupBody>
            <GroupTitle>Редактирование</GroupTitle>
          </Group>
        </Ribbon>

        <QuickAccess>
          <button aria-label="Сохранить"><SaveIcon /></button>
          <WithCaret><button aria-label="Отменить"><UndoIcon /></button><Caret /></WithCaret>
          <button aria-label="Открыть"><OpenIcon /></button>
          <button aria-label="Повторить"><RedoIcon /></button>
          <Customize aria-label="Настройка панели"><BarCaret /></Customize>
        </QuickAccess>

        <DocTabs>
          <DocTab href="#" $w={82}><WordDocIcon /><DocName>ботаника</DocName></DocTab>
          <DocTab href="#" $w={219}><WordDocIcon /><DocName>доклад Сморжевская Елена Сергеевна</DocName></DocTab>
          <DocTab href="#" $w={67}><WordDocIcon /><DocName>ЛПЗ 6</DocName></DocTab>
          <DocTab href="#" $w={80} $on><WordDocIcon /><DocName>Д.З.№5 *</DocName><CrossIcon s={6} c="#8a8577" w={2} /></DocTab>
          <DocTab href="#" $w={21} aria-label="Новый документ" />
          <DocTools>
            <DocTool aria-label="Список документов"><Caret c="#111" /></DocTool>
            <DocTool aria-label="Закрыть вкладку"><CrossIcon s={6} c="#111" w={2} /></DocTool>
          </DocTools>
        </DocTabs>
        <TabRule />

        <Editor>
          <TabSelector aria-label="Тип табуляции">
            <svg width="9" height="9" viewBox="0 0 9 9"><path d="M0 0h9v9H0z" fill="#e8f0fb" /><path d="M3 2v4.500h4" fill="none" stroke="#26395c" strokeWidth="1.500" /></svg>
          </TabSelector>
          <HRuler><HorizontalRuler /></HRuler>
          <RightColumn>
            <Split aria-label="Разделить" />
            <RulerToggle aria-label="Линейка">
              <svg width="8" height="7" viewBox="0 0 8 7"><path d="M.5 1.500V6h7V1.500H5M.5 1.500H3M3 .5l2 3" fill="#fff" stroke="#4a5468" /></svg>
            </RulerToggle>
            <Track>
              <svg width="6" height="4" viewBox="0 0 6 4"><path d="M0 4 3 0l3 4z" fill="#475d8c" /></svg>
              <ThumbSlot><Thumb><i /><i /></Thumb></ThumbSlot>
              <svg width="6" height="4" viewBox="0 0 6 4"><path d="M0 0h6L3 4z" fill="#475d8c" /></svg>
            </Track>
            <BrowseButtons>
              <svg width="5" height="6" viewBox="0 0 5 6"><path d="M2.500 0 5 2.500H0zM2.500 3 5 6H0z" fill="#111" /></svg>
              <svg width="6" height="6" viewBox="0 0 6 6"><circle cx="3" cy="3" r="2.300" fill="#e6e3da" stroke="#444" /></svg>
              <svg width="5" height="6" viewBox="0 0 5 6"><path d="M0 0h5L2.500 3zM0 3h5L2.500 6z" fill="#111" /></svg>
            </BrowseButtons>
          </RightColumn>
          <VRuler><VerticalRuler /></VRuler>
          <Workspace>
            <Sweep viewBox="0 0 193 86">
              <path d="M0 0h193v8Q75 41 0 85z" fill="#c9dcf3" fillOpacity=".25" />
              <path d="M0 0h193v8Q75 37 0 68z" fill="#c9dcf3" fillOpacity=".4" />
            </Sweep>
            <Page>
              <Heading>Вариант 5.</Heading>
              <p><Selected>Напишите уравнения реакций, с помощью которых можно осуществить<br />следующие превращения:&nbsp;</Selected></p>
              <ReactionScheme />
            </Page>
          </Workspace>
        </Editor>

        <StatusBar>
          <StatusItem $w={77}>Страница: 3 из 5</StatusItem>
          <StatusItem $w={86}>Число слов: 10/125</StatusItem>
          <StatusItem $w={108}><ProofIcon />Русский (Россия)</StatusItem>
          <ViewButtons>
            <ViewButton $on aria-label="Разметка страницы"><ViewIcon kind="print" /></ViewButton>
            <ViewButton aria-label="Режим чтения"><ViewIcon kind="read" /></ViewButton>
            <ViewButton aria-label="Веб-документ"><ViewIcon kind="web" /></ViewButton>
            <ViewButton aria-label="Структура"><ViewIcon kind="outline" /></ViewButton>
            <ViewButton aria-label="Черновик"><ViewIcon kind="draft" /></ViewButton>
          </ViewButtons>
          <Zoom>
            100%
            <ZoomSign />
            <ZoomRange type="range" min="0" max="100" defaultValue="50" aria-label="Масштаб" />
            <ZoomSign plus />
          </Zoom>
        </StatusBar>

        <Taskbar>
          <TaskButton aria-label="Пуск"><StartIcon /></TaskButton>
          <TaskButton aria-label="Поиск"><SearchIcon /></TaskButton>
          <TaskButton aria-label="Представление задач"><TaskViewIcon /></TaskButton>
          <TaskButton $open aria-label="Проводник"><ExplorerIcon /></TaskButton>
          <TaskButton $open aria-label="Viber"><ViberIcon /></TaskButton>
          <TaskButton $open aria-label="Chrome"><ChromeIcon /></TaskButton>
          <TaskButton $open aria-label="PowerPoint"><PowerPointIcon /></TaskButton>
          <TaskButton $open aria-label="Фотографии"><PhotosIcon /></TaskButton>
          <TaskButton $open $active aria-label="Word"><WordIcon /></TaskButton>
          <Tray>
            <span>Ссылки</span>
            <svg width="10" height="6" viewBox="0 0 10 6" fill="none" stroke="#fff"><path d="M1 5.500 5 1l4 4.500" /></svg>
            <svg width="12" height="7" viewBox="0 0 12 7" fill="none" stroke="#fff"><path d="M1.500.5h9v6h-9zM.5 2.500v2" /><path d="M4 2v3" /></svg>
            <svg width="13" height="10" viewBox="0 0 13 10" fill="none" stroke="#fff"><path d="M.5 3.500h2L5.500 1v8L2.500 6.500h-2zM7 3.500q1 1.500 0 3M9 2q2 3 0 6M11 .7q2.500 4.300 0 8.600" /></svg>
            <svg width="11" height="10" viewBox="0 0 11 10" fill="none" stroke="#ddd"><path d="M1 9.500A9 9 0 0 1 10.500.7M3.500 9.500A6.500 6.500 0 0 1 10.500 3.300M6 9.500A4 4 0 0 1 10.500 6M8.500 9.500A2 2 0 0 1 10.500 8" /></svg>
            <span>ENG</span>
            <Clock>15:25<br />13.04.2021</Clock>
            <Notice aria-label="Уведомления">
              <svg width="12" height="12" viewBox="0 0 12 12" fill="none" stroke="#fff"><path d="M.5.5h11v8.500H7.500L6 11 4.500 9h-4z" /></svg>
            </Notice>
          </Tray>
        </Taskbar>
      </Window>
    </>
  );
}
